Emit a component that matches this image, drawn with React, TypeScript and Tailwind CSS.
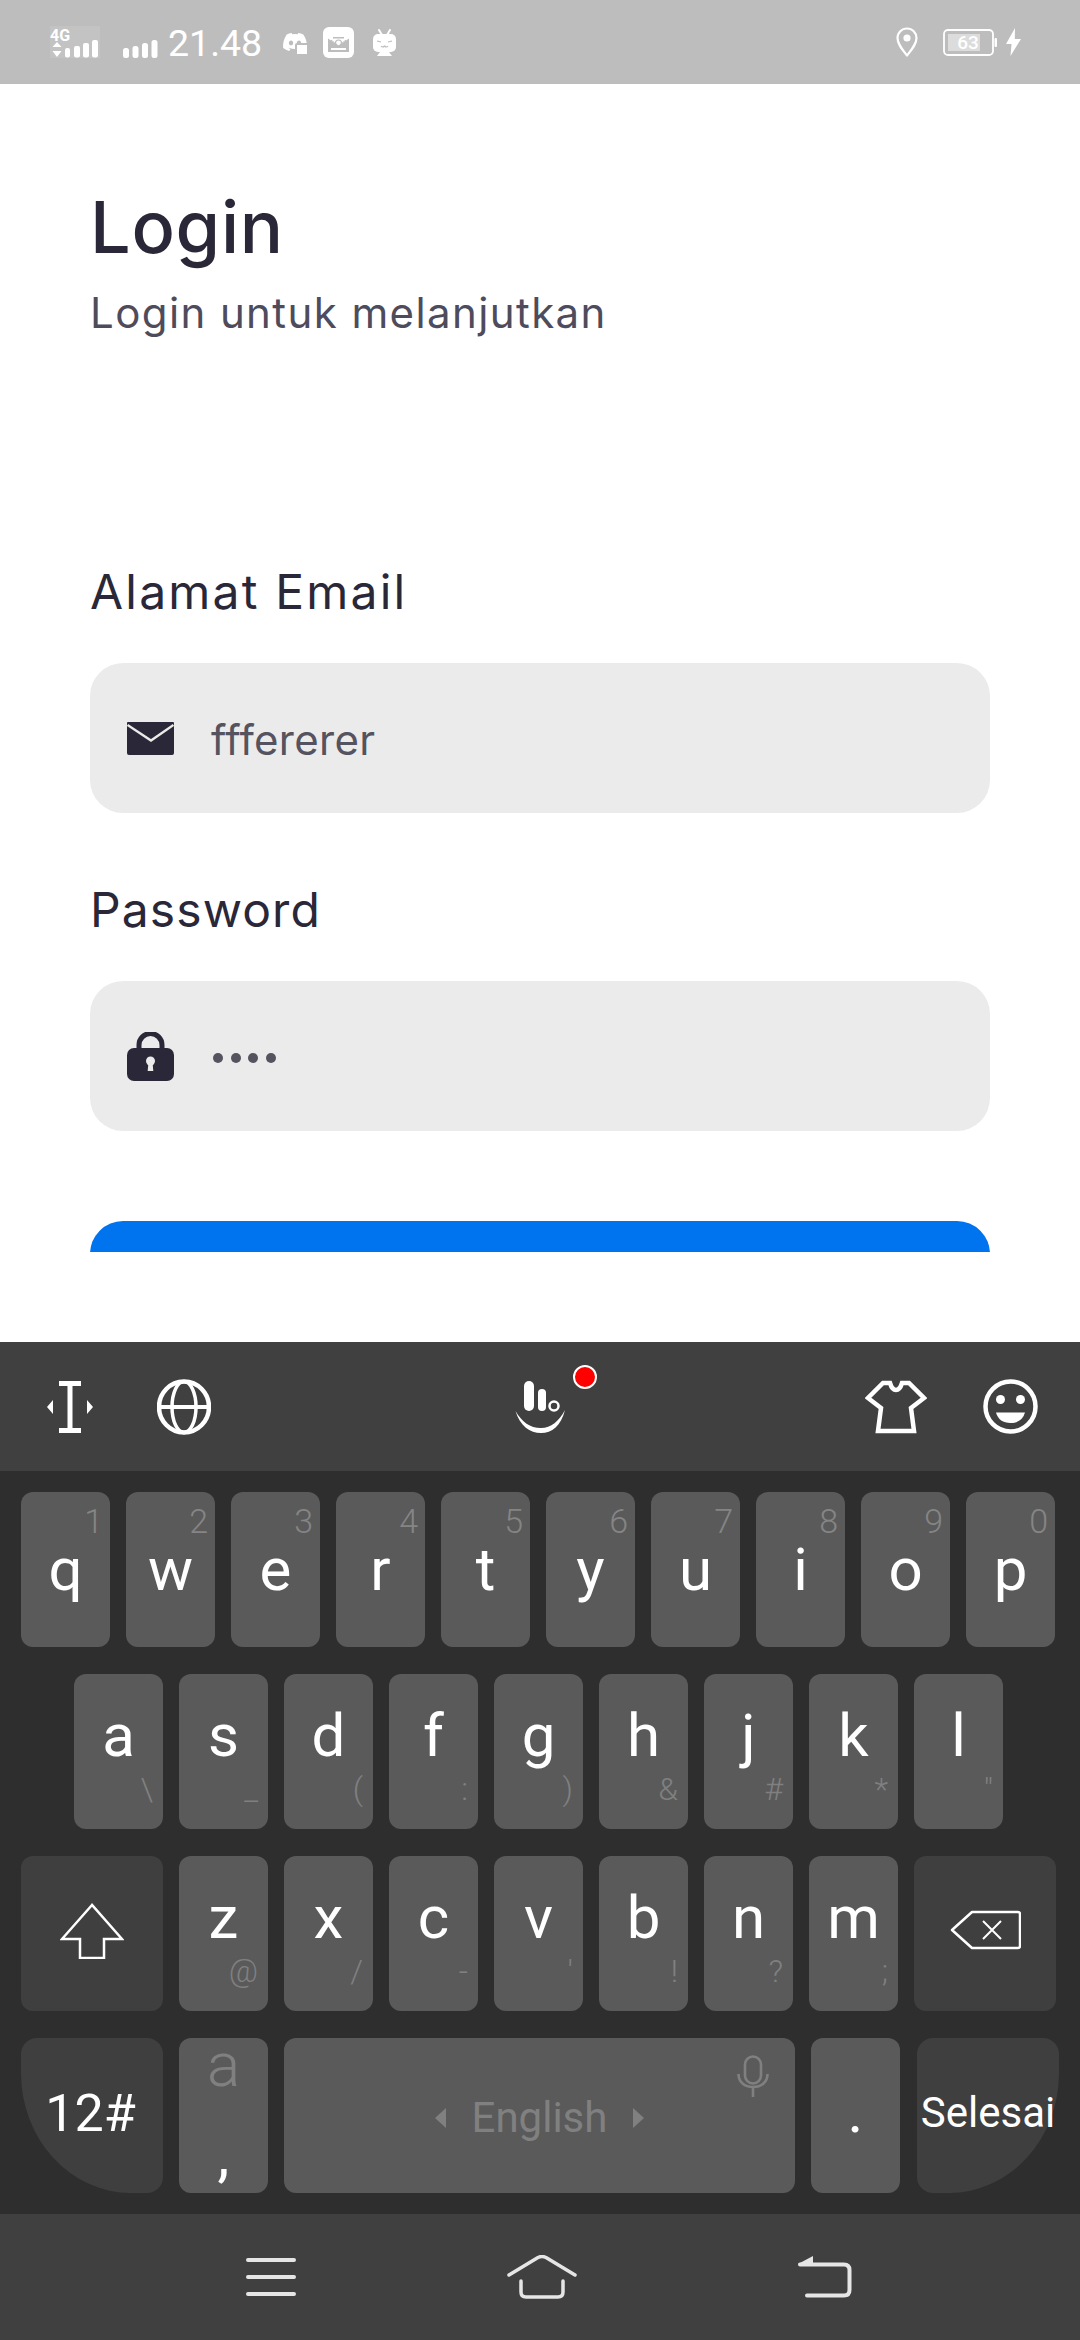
import React from "react";
import { FaDiscord } from "react-icons/fa";

const ink = "#2a2838";

function Key({ ch, hint, top = false, rowOne = false }: { ch: string; hint: string; top?: boolean; rowOne?: boolean }) {
  return (
    <div className={`relative flex h-[155px] w-[89px] shrink-0 justify-center rounded-xl bg-[#5a5a5a] ${rowOne ? "pt-[48px]" : "pt-[32px]"}`}>
      <span className="text-[60px] leading-[60px] text-white">{ch}</span>
      <span className={`absolute font-light ${top ? "top-[13px] right-[7px] text-[34px] leading-8 text-[#858585]" : "top-[99px] right-[10px] text-[32px] leading-8 text-[#808080]"}`}>{hint}</span>
    </div>
  );
}

function Signal() {
  return (
    <svg width="35" height="18" viewBox="0 0 35 18" fill="#fff">
      <rect x="0" y="8" width="6" height="10" rx="2.5" />
      <rect x="9.500" y="6" width="6" height="12" rx="2.5" />
      <rect x="19" y="3" width="6" height="15" rx="2.5" />
      <rect x="28.500" y="0" width="6" height="18" rx="2.5" />
    </svg>
  );
}

function StatusBar() {
  return (
    <div className="flex h-[84px] shrink-0 items-center justify-between bg-[#bdbdbd] pr-[59px] pl-[50px]">
      <div className="flex items-center">
        <svg width="50" height="32" viewBox="0 0 50 32" fill="#fff">
          <rect width="50" height="32" fill="#c9c9c9" fillOpacity="0.5" />
          <text x="0" y="15" fontFamily="Roboto" fontWeight="700" fontSize="16" fill="#fff">4G</text>
          <path d="M5 16l4.500 5h-9zM5 31l4.500-6h-9z" transform="translate(2 0)" />
          <rect x="15" y="22" width="5" height="9.500" rx="2" />
          <rect x="24" y="20" width="6" height="11.500" rx="2" />
          <rect x="33" y="17" width="6" height="14.500" rx="2" />
          <rect x="42" y="14" width="6" height="17.500" rx="2" />
        </svg>
        <div className="mt-[14px] ml-[23px]"><Signal /></div>
        <span className="mt-[2px] ml-[10px] font-['Roboto'] text-[37.500px] leading-[44px] text-white">21.48</span>
        <div className="relative ml-[20px] h-[26px] w-[26px]">
          <FaDiscord className="h-[26px] w-[26px] text-white" />
          <span className="absolute right-[-1px] bottom-[-1px] h-[13px] w-[14px] rounded-[2px] border-2 border-[#bdbdbd] bg-white" />
        </div>
        <svg className="ml-[15px]" width="31" height="31" viewBox="0 0 31 31">
          <rect width="31" height="31" rx="6" fill="#fff" />
          <path d="M5 7h21v18H5z" fill="#bdbdbd" />
          <path d="M3 7h25v3L15.500 19 3 10z" fill="#fff" />
          <path d="M10 10h11v1.500H10z" fill="#bdbdbd" />
          <path d="M8 13l7.500 6 7.500-6" stroke="#bdbdbd" strokeWidth="1" fill="none" />
          <path d="M8 21h15v2H8z" fill="#fff" />
          <circle cx="15.500" cy="16" r="3" fill="none" stroke="#bdbdbd" strokeWidth="1.200" />
        </svg>
        <svg className="ml-[19px]" width="23" height="27" viewBox="0 0 23 27">
          <path d="M6 1l3 5M17 1l-3 5" stroke="#fff" strokeWidth="2" strokeLinecap="round" />
          <rect x="0" y="5" width="23" height="18" rx="5" fill="#fff" />
          <path d="M4 27l3-4h9l3 4z" fill="#fff" />
          <path d="M4 12l4 1M19 12l-4 1M8 17q1.500 2 3.500 0q2 2 3.500 0" stroke="#bdbdbd" strokeWidth="1.200" fill="none" />
        </svg>
      </div>
      <div className="flex items-center">
        <svg width="22" height="30" viewBox="0 0 22 30">
          <path d="M11 28.500C6 22 1.500 17 1.500 11a9.500 9.500 0 0 1 19 0C20.500 17 16 22 11 28.500z" fill="none" stroke="#fff" strokeWidth="2.200" strokeLinejoin="round" />
          <circle cx="11" cy="11" r="3.600" fill="#fff" />
        </svg>
        <div className="relative ml-[25px] flex h-[27px] w-[54px] items-center">
          <svg width="54" height="27" viewBox="0 0 54 27">
            <rect x="1" y="1" width="49" height="25" rx="4" fill="none" stroke="#fff" strokeWidth="1.800" />
            <rect x="5" y="5" width="32" height="17" fill="#dcdcdc" />
            <rect x="51.500" y="9" width="2.500" height="9" rx="1" fill="#fff" />
          </svg>
          <span className="absolute inset-0 pr-[4px] text-center font-['Roboto'] text-[19px] leading-[27px] font-medium text-white">63</span>
        </div>
        <svg className="ml-[9px]" width="15" height="28" viewBox="0 0 15 28" fill="#fff">
          <path d="M9 0L0 16h5.500L4.500 28 15 11H8.800z" />
        </svg>
      </div>
    </div>
  );
}

function Field({ icon, children }: { icon: React.ReactNode; children: React.ReactNode }) {
  return (
    <div className="flex h-[150px] items-center rounded-[33px] bg-[#ebebeb] pl-[37px]">
      <div className="flex w-[84px] shrink-0 items-center">{icon}</div>
      {children}
    </div>
  );
}

function Form() {
  return (
    <div className="h-[1168px] shrink-0 overflow-hidden bg-white px-[90px] pt-[103px] font-['Inter']">
      <h1 className="text-[72px] leading-[80px] font-medium tracking-[0.7px] text-[#2a2838]">Login</h1>
      <p className="mt-[21px] text-[42px] leading-[50px] tracking-[1.400px] text-[#4e4c5c]">Login untuk melanjutkan</p>
      <label className="mt-[226px] block text-[48px] leading-[56px] tracking-[2.200px] text-[#2a2838]">Alamat Email</label>
      <div className="mt-[43px]">
        <Field
          icon={
            <svg width="47" height="33" viewBox="0 0 47 33">
              <path d="M1 0h45a1 1 0 0 1 1 1v30a2 2 0 0 1-2 2H2a2 2 0 0 1-2-2V1a1 1 0 0 1 1-1z" fill={ink} />
              <path d="M0.500 3L24 18.500 46.500 3" fill="none" stroke="#ebebeb" strokeWidth="2.400" />
            </svg>
          }
        >
          <span className="mt-[3px] text-[42px] leading-[50px] tracking-[0.3px] text-[#55535f]">fffererer</span>
        </Field>
      </div>
      <label className="mt-[69px] block text-[48px] leading-[56px] tracking-[1.100px] text-[#2a2838]">Password</label>
      <div className="mt-[43px]">
        <Field
          icon={
            <svg width="47" height="49" viewBox="0 0 47 49">
              <path d="M12 19v-6a11.500 11.500 0 0 1 23 0v6" fill="none" stroke={ink} strokeWidth="5" />
              <rect x="0" y="16" width="47" height="33" rx="7" fill={ink} />
              <circle cx="23.500" cy="29" r="4.500" fill="#ebebeb" />
              <path d="M21.500 30h4l0.800 9h-5.600z" fill="#ebebeb" />
            </svg>
          }
        >
          <div className="mt-[4px] ml-[2px] flex gap-[7.500px]">
            <span className="h-[10px] w-[10px] rounded-full bg-[#55535f]" />
            <span className="h-[10px] w-[10px] rounded-full bg-[#55535f]" />
            <span className="h-[10px] w-[10px] rounded-full bg-[#55535f]" />
            <span className="h-[10px] w-[10px] rounded-full bg-[#55535f]" />
          </div>
        </Field>
      </div>
      <button className="mt-[90px] block h-[150px] w-full rounded-[33px] bg-[#0073ef]" />
    </div>
  );
}

function Toolbar() {
  return (
    <div className="flex h-[129px] items-center bg-[#404040] pl-[47px]">
      <svg width="46" height="52" viewBox="0 0 46 52" fill="#fff">
        <path d="M12 0h22v5h-8.500v42H34v5H12v-5h8.500V5H12z" />
        <path d="M6 19v14l-6-7zM40 19v14l6-7z" />
      </svg>
      <svg className="ml-[64px]" width="54" height="56" viewBox="0 0 54 56" fill="none" stroke="#fff" strokeWidth="4">
        <ellipse cx="27" cy="28" rx="25" ry="25.500" strokeWidth="4.500" />
        <ellipse cx="27" cy="28" rx="12" ry="25.500" strokeWidth="3.500" />
        <path d="M2 28h50" />
      </svg>
      <div className="relative ml-[304px] h-[55px] w-[51px]">
        <svg width="51" height="55" viewBox="0 0 51 55">
          <rect x="9" y="2" width="10" height="30" rx="5" fill="#fff" />
          <rect x="23" y="10" width="8" height="22" rx="4" fill="#fff" />
          <circle cx="39" cy="27" r="4.500" fill="none" stroke="#fff" strokeWidth="2.500" />
          <path d="M0.500 32C5 47 15 54 26 54C37 54 46 47 50 31C44 42 36 49 26 49C15 49 7 43 0.500 32z" fill="#fff" />
        </svg>
        <span className="absolute top-[-14px] right-[-31px] h-6 w-6 rounded-full border-[2.500px] border-white bg-[#ff0000]" />
      </div>
      <svg className="ml-[299px]" width="62" height="54" viewBox="0 0 62 54" fill="none" stroke="#fff" strokeWidth="4.500" strokeLinejoin="miter">
        <path d="M18 3h7c1.500 5 3.500 7 6 7s4.500-2 6-7h7l15 15-13 10 3 23H13l3-23L3 18z" />
      </svg>
      <svg className="ml-[56px]" width="55" height="55" viewBox="0 0 55 55">
        <circle cx="27.500" cy="27.500" r="25" fill="none" stroke="#fff" strokeWidth="4.500" />
        <circle cx="17.500" cy="20.500" r="4.500" fill="#fff" />
        <circle cx="37.500" cy="20.500" r="4.500" fill="#fff" />
        <path d="M13 33.500h29c-2 7-7 10.500-14.500 10.500S15 40.500 13 33.500z" fill="#fff" />
      </svg>
    </div>
  );
}

function Keyboard() {
  const r1: [string, string][] = [["q", "1"], ["w", "2"], ["e", "3"], ["r", "4"], ["t", "5"], ["y", "6"], ["u", "7"], ["i", "8"], ["o", "9"], ["p", "0"]];
  const r2: [string, string][] = [["a", "\\"], ["s", "_"], ["d", "("], ["f", ":"], ["g", ")"], ["h", "&"], ["j", "#"], ["k", "*"], ["l", '"']];
  const r3: [string, string][] = [["z", "@"], ["x", "/"], ["c", "-"], ["v", "'"], ["b", "!"], ["n", "?"], ["m", ";"]];
  return (
    <div className="h-[743px] bg-[#2e2e2e] pt-[21px] font-['Roboto']">
      <div className="flex gap-4 pl-[21px]">
        {r1.map(([c, h]) => <Key key={c} ch={c} hint={h} top rowOne />)}
      </div>
      <div className="mt-[27px] flex gap-4 pl-[74px]">
        {r2.map(([c, h]) => <Key key={c} ch={c} hint={h} />)}
      </div>
      <div className="mt-[27px] flex gap-4 pl-[21px]">
        <div className="flex h-[155px] w-[142px] items-center justify-center rounded-xl bg-[#3f3f3f] pb-[5px]">
          <svg width="64" height="56" viewBox="0 0 64 56" fill="none" stroke="#fff" strokeWidth="2.500">
            <path d="M32 2L2 36h18v19h24V36h18z" />
          </svg>
        </div>
        {r3.map(([c, h]) => <Key key={c} ch={c} hint={h} />)}
        <div className="flex h-[155px] w-[142px] items-center justify-center rounded-xl bg-[#3f3f3f] pb-[7px]">
          <svg width="71" height="40" viewBox="0 0 71 40" fill="none" stroke="#fff" strokeWidth="2.500">
            <path d="M22 2h46a2 2 0 0 1 2 2v32a2 2 0 0 1-2 2H22L2 20z" strokeLinejoin="round" />
            <path d="M33 11l18 18M51 11L33 29" strokeWidth="2" />
          </svg>
        </div>
      </div>
      <div className="mt-[27px] flex pl-[21px]">
        <div className="flex h-[155px] w-[142px] justify-center rounded-[16px_16px_16px_110px_/_16px_16px_16px_120px] bg-[#3f3f3f] pt-[46px] pr-[3px] text-[52px] leading-[60px] text-white">12#</div>
        <div className="relative ml-4 flex h-[155px] w-[89px] justify-center rounded-xl bg-[#5a5a5a]">
          <span className="mt-[-3px] text-[62px] leading-[60px] font-light text-[#808080]">a</span>
          <span className="absolute top-[87px] text-[60px] leading-[60px] text-white">,</span>
        </div>
        <div className="relative ml-4 flex h-[155px] w-[511px] justify-center rounded-xl bg-[#5a5a5a] pt-[55px]">
          <div className="flex h-[50px] items-center gap-[26px] text-[#808080]">
            <svg width="11" height="20" viewBox="0 0 11 20" fill="#808080"><path d="M11 0v20L0 10z" /></svg>
            <span className="text-[42px] leading-[50px]">English</span>
            <svg width="11" height="20" viewBox="0 0 11 20" fill="#808080"><path d="M0 0v20l11-10z" /></svg>
          </div>
          <svg className="absolute top-[17px] right-[26px]" width="32" height="42" viewBox="0 0 32 42" fill="none" stroke="#808080" strokeWidth="2.600">
            <rect x="8" y="1.500" width="16" height="27" rx="8" />
            <path d="M1.500 19c0 8 6 13 14.500 13s14.500-5 14.500-13M16 32v10" />
          </svg>
        </div>
        <div className="ml-4 flex h-[155px] w-[89px] justify-center rounded-xl bg-[#5a5a5a] pt-[44px]">
          <span className="text-[60px] leading-[60px] text-white">.</span>
        </div>
        <div className="ml-[17px] flex h-[155px] w-[142px] justify-center rounded-[16px_16px_110px_16px_/_16px_16px_120px_16px] bg-[#3f3f3f] pt-[50px] text-[42px] leading-[50px] text-white">Selesai</div>
      </div>
    </div>
  );
}

function NavBar() {
  return (
    <div className="flex h-[126px] items-center bg-[#404040] pl-[246px]">
      <svg width="50" height="38" viewBox="0 0 50 38" stroke="#e6e6e6" strokeWidth="4" strokeLinecap="round">
        <path d="M2 2h46M2 19h46M2 36h46" />
      </svg>
      <svg className="ml-[211px]" width="70" height="44" viewBox="0 0 70 44" fill="none" stroke="#e6e6e6" strokeWidth="3.500" strokeLinecap="round" strokeLinejoin="round">
        <path d="M2 20L31 2.500q4-2 8 0L68 20" />
        <path d="M14 26v11q0 5 5 5h32q5 0 5-5V26" />
      </svg>
      <svg className="ml-[221px]" width="54" height="42" viewBox="0 0 54 42" fill="none">
        <path d="M0 8l15-8v8z" fill="#e6e6e6" />
        <path d="M2 8.500h44q5.500 0 5.500 5.500v20q0 5.500-5.500 5.500H9" stroke="#e6e6e6" strokeWidth="4" strokeLinecap="round" />
      </svg>
    </div>
  );
}

export default function App() {
  return (
    <div className="flex h-[2340px] w-[1080px] flex-col overflow-hidden bg-white font-['Roboto',sans-serif]">
      <StatusBar />
      <Form />
      <div className="h-[90px] shrink-0 bg-white" />
      <Toolbar />
      <Keyboard />
      <NavBar />
    </div>
  );
}
